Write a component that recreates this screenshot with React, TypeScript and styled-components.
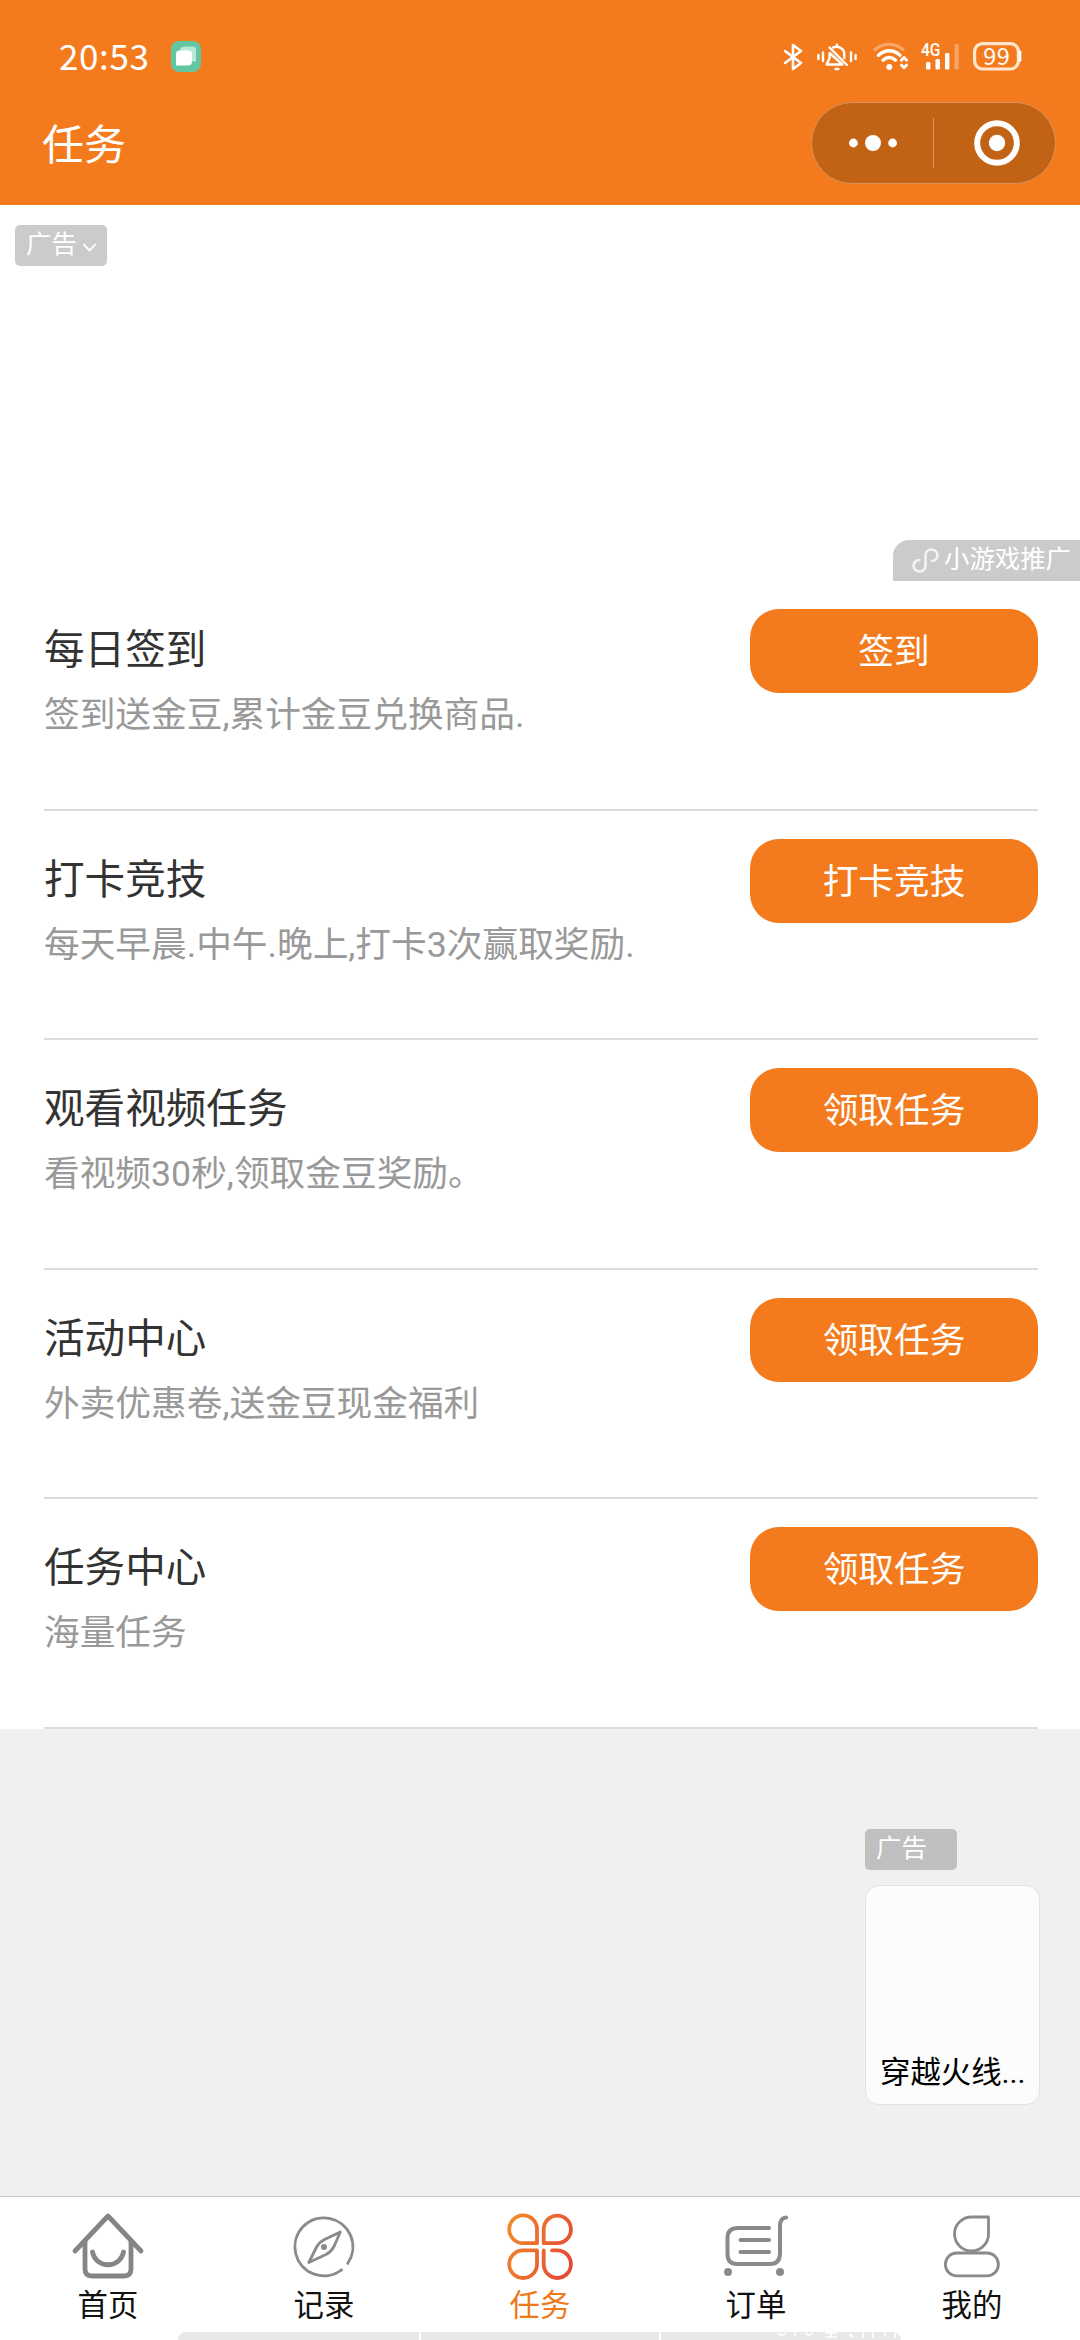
import React from "react";
import styled, { createGlobalStyle } from "styled-components";

const ORANGE = "#f47b1d";
const GREY = "#8a8a8a";

const GlobalStyle = createGlobalStyle`
  * { box-sizing: border-box; }
  body {
    margin: 0;
    background: #f0f0f0;
    font-family: Roboto, "Noto Sans CJK SC", sans-serif;
  }
  svg { display: block; flex: none; overflow: visible; }
`;

const Screen = styled.div`
  width: 1080px;
  height: 2340px;
  overflow: hidden;
  display: flex;
  flex-direction: column;
  background: #f0f0f0;
`;

const Header = styled.header`
  height: 205px;
  flex: none;
  background: ${ORANGE};
  color: #fff;
`;

const StatusBar = styled.div`
  height: 102px;
  padding: 11px 58px 0 59px;
  display: flex;
  align-items: center;
  justify-content: space-between;
`;

const Clock = styled.div`
  display: flex;
  align-items: center;
  gap: 22px;
  font: 400 35px/40px "Noto Sans CJK SC", sans-serif;
  letter-spacing: 0.6px;
`;

const ClockTime = styled.span`
  margin-top: -4px;
`;

const StatusIcons = styled.div`
  display: flex;
  align-items: center;
`;

const TitleBar = styled.div`
  height: 82px;
  padding: 0 24px 0 42px;
  display: flex;
  align-items: center;
  justify-content: space-between;
`;

const PageTitle = styled.h1`
  margin: 6px 0 0;
  font-size: 42px;
  font-weight: 400;
  line-height: 60px;
`;

const Capsule = styled.div`
  width: 245px;
  height: 82px;
  border-radius: 41px;
  border: 1px solid #d9935a;
  background: #c26214;
  display: flex;
  align-items: center;
`;

const CapsuleHalf = styled.div<{ $nudge?: number }>`
  flex: none;
  width: 121px;
  display: flex;
  justify-content: center;
  padding-left: ${(p) => p.$nudge ?? 0}px;
`;

const CapsuleRule = styled.div`
  width: 1px;
  height: 50px;
  background: #da985f;
`;

const AdBanner = styled.section`
  height: 376px;
  flex: none;
  background: #fff;
  display: flex;
  flex-direction: column;
  justify-content: space-between;
  padding: 20px 0 0 15px;
`;

const AdBadge = styled.div<{ $tone?: string }>`
  width: 92px;
  height: 41px;
  border-radius: 5px;
  background: ${(p) => p.$tone ?? "#cbcbcb"};
  color: #fff;
  display: flex;
  align-items: center;
  gap: 6px;
  padding: 0 0 3px 11px;
  font-size: 25.4px;
  line-height: 36px;
`;

const PromoTag = styled.div`
  align-self: flex-end;
  width: 187px;
  height: 41px;
  border-top-left-radius: 16px;
  background: #cbcbcb;
  color: #fff;
  display: flex;
  align-items: center;
  gap: 5px;
  padding-left: 19px;
  font-size: 25.4px;
  line-height: 36px;
  white-space: nowrap;
`;

const PromoText = styled.span`
  margin-top: -3px;
`;

const TaskList = styled.main`
  flex: none;
  height: 1148px;
  background: #fff;
  padding: 0 42px 0 44px;
  display: grid;
  grid-template-rows: repeat(5, 1fr);
`;

const TaskRow = styled.article`
  display: flex;
  justify-content: space-between;
  align-items: flex-start;
  border-bottom: 2px solid #dcdcdc;
  padding-top: 28px;
`;

const TaskTitle = styled.h2`
  margin: 11px 0 0;
  font-size: 40.6px;
  font-weight: 400;
  line-height: 60px;
  color: #333;
`;

const TaskNote = styled.p`
  margin: 8px 0 0;
  font-size: 35.7px;
  line-height: 54px;
  color: #999;
`;

const TaskButton = styled.button`
  width: 288px;
  height: 84px;
  border: 0;
  border-radius: 29px;
  padding: 0 0 5px;
  background: ${ORANGE};
  color: #fff;
  font: inherit;
  font-size: 35.7px;
`;

const Backdrop = styled.section`
  flex: 1;
  display: flex;
  flex-direction: column;
  align-items: flex-end;
  padding: 100px 40px 0 0;
`;

const FloatingAd = styled.aside`
  width: 175px;
  display: flex;
  flex-direction: column;
  gap: 15px;
`;

const GameCard = styled.div`
  height: 220px;
  border: 1px solid #e2e2e2;
  border-radius: 14px;
  background: #fcfcfc;
  display: flex;
  align-items: flex-end;
  padding: 0 0 9px 14px;
  font-size: 30.4px;
  line-height: 44px;
  color: #000;
  white-space: nowrap;
`;

const TabBar = styled.nav`
  height: 136px;
  flex: none;
  border-top: 1px solid #c6c6c6;
  background: #fff;
  display: grid;
  grid-template-columns: repeat(5, 1fr);
`;

const Tab = styled.a<{ $active?: boolean }>`
  display: flex;
  flex-direction: column;
  align-items: center;
  padding-top: 14px;
  font-size: 30.4px;
  line-height: 44px;
  color: ${(p) => (p.$active ? "#ee7a1c" : "#111")};
`;

const TabLabel = styled.span`
  margin-top: 3px;
`;

const BottomStrip = styled.footer`
  height: 8px;
  flex: none;
  background: #fff;
  padding-left: 178px;
  display: flex;
  gap: 2px;
`;

const StripPart = styled.div<{ $w: number; $left?: boolean; $right?: boolean }>`
  width: ${(p) => p.$w}px;
  height: 8px;
  overflow: hidden;
  background: #e8e8e8;
  border-radius: ${(p) => (p.$left ? "8px 0 0 0" : p.$right ? "0 8px 0 0" : "0")};
`;

const BluetoothIcon = () => (
  <svg width="20" height="28" viewBox="0 0 20 28" fill="none" stroke="#fff" strokeWidth="2.6" strokeLinejoin="round" strokeLinecap="round">
    <path d="M2 8L18 20L10 26V2L18 8L2 20" />
  </svg>
);

const MutedBellIcon = () => (
  <svg width="40" height="28" viewBox="0 0 40 28" fill="none" stroke="#fff" strokeWidth="2.4" strokeLinecap="round" strokeLinejoin="round">
    <path d="M1.4 12V16M6 9.5V18M34 9.5V18M38.6 12V16" />
    <path d="M12.6 10V15L9.6 21.5H25.5Z" />
    <path d="M16 4.6C21 2.4 27.3 5.5 27.3 11V15" />
    <path d="M12.5 4.5L30 22M20 1.6V3M18.6 26H21.4" />
  </svg>
);

const WifiIcon = () => (
  <svg width="36" height="28" viewBox="0 0 36 28" fill="none" stroke="#fff" strokeWidth="3.4" strokeLinecap="round">
    <path d="M2 6.5C10 -0.4 22 -0.4 30 6.5" stroke="#fff" opacity=".32" />
    <path d="M5.5 12.3C12 6.3 20.5 6.3 27 12.3M10 17.2C14 13.7 18.5 13.7 22.5 17.2" />
    <circle cx="16.3" cy="24" r="3" fill="#fff" stroke="none" />
    <path d="M28.4 17.2L31 14.4L33.6 17.2M28.4 22L31 24.8L33.6 22" strokeWidth="2.8" strokeLinejoin="round" />
  </svg>
);

const SignalIcon = () => (
  <svg width="38" height="29" viewBox="0 0 38 29" fill="#fff">
    <text x="0" y="14" fontSize="17.5" fontFamily="Roboto, sans-serif" fontWeight="500" textLength="19.5" lengthAdjust="spacingAndGlyphs">4G</text>
    <rect x="5" y="20" width="4.4" height="7.6" rx="1.3" />
    <rect x="14.5" y="17" width="4.4" height="10.6" rx="1.3" />
    <rect x="24" y="11" width="4.4" height="16.6" rx="1.3" />
    <rect x="33.4" y="2" width="4.4" height="25.6" rx="1.3" opacity=".3" />
  </svg>
);

const BatteryIcon = () => (
  <svg width="49" height="29" viewBox="0 0 49 29" fill="none">
    <rect x="1.6" y="1.6" width="43.8" height="25.4" rx="8" stroke="#ffe6cf" strokeWidth="3.2" />
    <path d="M47 10V18.5" stroke="#fff" strokeWidth="2.8" strokeLinecap="round" />
    <text x="23.8" y="22.6" textAnchor="middle" fontSize="23.5" fontFamily="Noto Sans CJK SC, sans-serif" fill="#fff" letterSpacing=".6">99</text>
  </svg>
);

const AppBadgeIcon = () => (
  <svg width="30" height="31" viewBox="0 0 30 31">
    <rect width="30" height="31" rx="8" fill="#63c6a3" />
    <path d="M9 8Q10.5 5.4 13 5.4H22Q25 5.4 25 8.4V20.4H20V10H9Z" fill="#b9e8d4" />
    <path d="M8.5 9.5H17.5Q21 9.5 21 13V20.5Q21 24.5 17 24.5H5V13Q5 9.5 8.5 9.5Z" fill="#fff" />
  </svg>
);

const HomeIcon = () => (
  <svg width="72" height="70" viewBox="0 0 72 70" fill="none" stroke="#858585" strokeWidth="4.8" strokeLinecap="round" strokeLinejoin="round">
    <path d="M3 40L36 5L69 40" />
    <path d="M13 31V58Q13 65 20 65H52Q59 65 59 58V31" />
    <path d="M20.5 41C24 58 48 58 51.5 41" />
  </svg>
);

const CompassIcon = () => (
  <svg width="72" height="70" viewBox="0 0 72 70" fill="none" stroke={GREY} strokeWidth="2.8" strokeLinecap="round" strokeLinejoin="round">
    <path d="M53.6 58.8A29 29 0 1 1 59.7 52.4" />
    <path d="M52.3 21L46 35.5Q43 41 38 43.6L20.8 51.5L28.6 36Q31.5 31 36.5 28.5Z" strokeWidth="2.8" />
    <circle cx="36" cy="36" r="3" fill={GREY} stroke="none" />
  </svg>
);

const CloverIcon = () => (
  <svg width="72" height="70" viewBox="0 1 72 70" fill="none" stroke="url(#clover)" strokeWidth="3.8" strokeLinecap="round" strokeLinejoin="round">
    <defs>
      <linearGradient id="clover" gradientUnits="userSpaceOnUse" x1="4" y1="20" x2="68" y2="46">
        <stop offset="0" stopColor="#f08a2a" />
        <stop offset="1" stopColor="#e64a35" />
      </linearGradient>
    </defs>
    <path d="M33 33.2H19.3A13.9 13.9 0 1 1 33 19.3Z" />
    <path d="M39.7 33.2V19.4A13.6 13.8 0 1 1 53.3 33.2Z" />
    <path d="M33 40.4H19.3A13.9 13.8 0 1 0 33 54.2Z" />
    <path d="M39.7 40.4V54.2A13.6 13.8 0 1 0 53.3 40.4H48" />
  </svg>
);

const CartIcon = () => (
  <svg width="72" height="70" viewBox="3 0 72 70" fill="none" stroke={GREY} strokeWidth="4" strokeLinecap="round">
    <path d="M52 17H21Q10.5 17 10.5 27V43Q10.5 53 20 53H53Q63 53 63 42V15Q63 7 69 6.5" />
    <path d="M23.5 29H52M23.5 41H52" />
    <circle cx="11" cy="61" r="4" fill={GREY} stroke="none" />
    <circle cx="63" cy="61" r="4" fill={GREY} stroke="none" />
  </svg>
);

const ProfileIcon = () => (
  <svg width="72" height="70" viewBox="0 0 72 70" fill="none" stroke={GREY} strokeWidth="2.8" strokeLinejoin="round">
    <path d="M36 6H52.5V22.5A17 17 0 1 1 36 6Z" />
    <rect x="9.4" y="42" width="53" height="22.8" rx="11.4" />
  </svg>
);

const tasks = [
  { title: "每日签到", note: "签到送金豆,累计金豆兑换商品.", action: "签到" },
  { title: "打卡竞技", note: "每天早晨.中午.晚上,打卡3次赢取奖励.", action: "打卡竞技" },
  { title: "观看视频任务", note: "看视频30秒,领取金豆奖励。", action: "领取任务" },
  { title: "活动中心", note: "外卖优惠卷,送金豆现金福利", action: "领取任务" },
  { title: "任务中心", note: "海量任务", action: "领取任务" },
];

const tabs = [
  { label: "首页", Icon: HomeIcon },
  { label: "记录", Icon: CompassIcon },
  { label: "任务", Icon: CloverIcon, active: true },
  { label: "订单", Icon: CartIcon },
  { label: "我的", Icon: ProfileIcon },
];

const IconSlot = styled.span<{ $gap: number }>`
  margin-right: ${(p) => p.$gap}px;
`;

export default function App() {
  return (
    <Screen>
      <GlobalStyle />
      <Header>
        <StatusBar>
          <Clock>
            <ClockTime>20:53</ClockTime>
            <AppBadgeIcon />
          </Clock>
          <StatusIcons>
            <IconSlot $gap={14}><BluetoothIcon /></IconSlot>
            <IconSlot $gap={16}><MutedBellIcon /></IconSlot>
            <IconSlot $gap={12}><WifiIcon /></IconSlot>
            <IconSlot $gap={14}><SignalIcon /></IconSlot>
            <BatteryIcon />
          </StatusIcons>
        </StatusBar>
        <TitleBar>
          <PageTitle>任务</PageTitle>
          <Capsule>
            <CapsuleHalf>
              <svg width="48" height="16" viewBox="0 0 48 16" fill="#fff">
                <circle cx="4.4" cy="8" r="4.4" />
                <circle cx="24" cy="8" r="8" />
                <circle cx="43.6" cy="8" r="4.4" />
              </svg>
            </CapsuleHalf>
            <CapsuleRule />
            <CapsuleHalf $nudge={4}>
              <svg width="46" height="46" viewBox="0 0 46 46">
                <circle cx="23" cy="23" r="19.8" fill="none" stroke="#fff" strokeWidth="6" />
                <circle cx="23" cy="23" r="8.2" fill="#fff" />
              </svg>
            </CapsuleHalf>
          </Capsule>
        </TitleBar>
      </Header>

      <AdBanner>
        <AdBadge>
          广告
          <svg width="13" height="9" viewBox="0 0 13 9" fill="none" stroke="#fff" strokeWidth="1.8" transform="translate(0 3)">
            <path d="M.4 1.2L6.5 7.4L12.6 1.2" />
          </svg>
        </AdBadge>
        <PromoTag>
          <svg width="27" height="25" viewBox="0 0 27 25" fill="none" stroke="#f4f4f4" strokeWidth="2.6" strokeLinecap="round">
            <path d="M7.5 12C3.5 12.5 1.5 15 1.5 18C1.5 21 4.5 23.5 7.8 23.5C11 23.5 13.5 21 13.5 18V7C13.5 4 16 1.5 19.2 1.5C22.5 1.5 25.5 4 25.5 7C25.5 10 23.5 12.5 20 13" />
          </svg>
          <PromoText>小游戏推广</PromoText>
        </PromoTag>
      </AdBanner>

      <TaskList>
        {tasks.map((t) => (
          <TaskRow key={t.title}>
            <div>
              <TaskTitle>{t.title}</TaskTitle>
              <TaskNote>{t.note}</TaskNote>
            </div>
            <TaskButton>{t.action}</TaskButton>
          </TaskRow>
        ))}
      </TaskList>

      <Backdrop>
        <FloatingAd>
          <AdBadge $tone="#c0c0c0">广告</AdBadge>
          <GameCard>穿越火线...</GameCard>
        </FloatingAd>
      </Backdrop>

      <TabBar>
        {tabs.map(({ label, Icon, active }) => (
          <Tab key={label} $active={active}>
            <Icon />
            <TabLabel>{label}</TabLabel>
          </Tab>
        ))}
      </TabBar>
      <BottomStrip>
        <StripPart $w={241} $left />
        <StripPart $w={238} />
        <StripPart $w={240} $right>
          <svg width="240" height="8" viewBox="0 0 240 8" fill="none" stroke="#fff" strokeWidth="1.6">
            <path d="M117 1Q121 5 125 1M134 0V4M144 1Q148 5 152 1M164 1H176M164 5H176M170 0V5M188 2L192 5M202 0V6M212 0V6M224 0V5M234 0V6" />
          </svg>
        </StripPart>
      </BottomStrip>
    </Screen>
  );
}
